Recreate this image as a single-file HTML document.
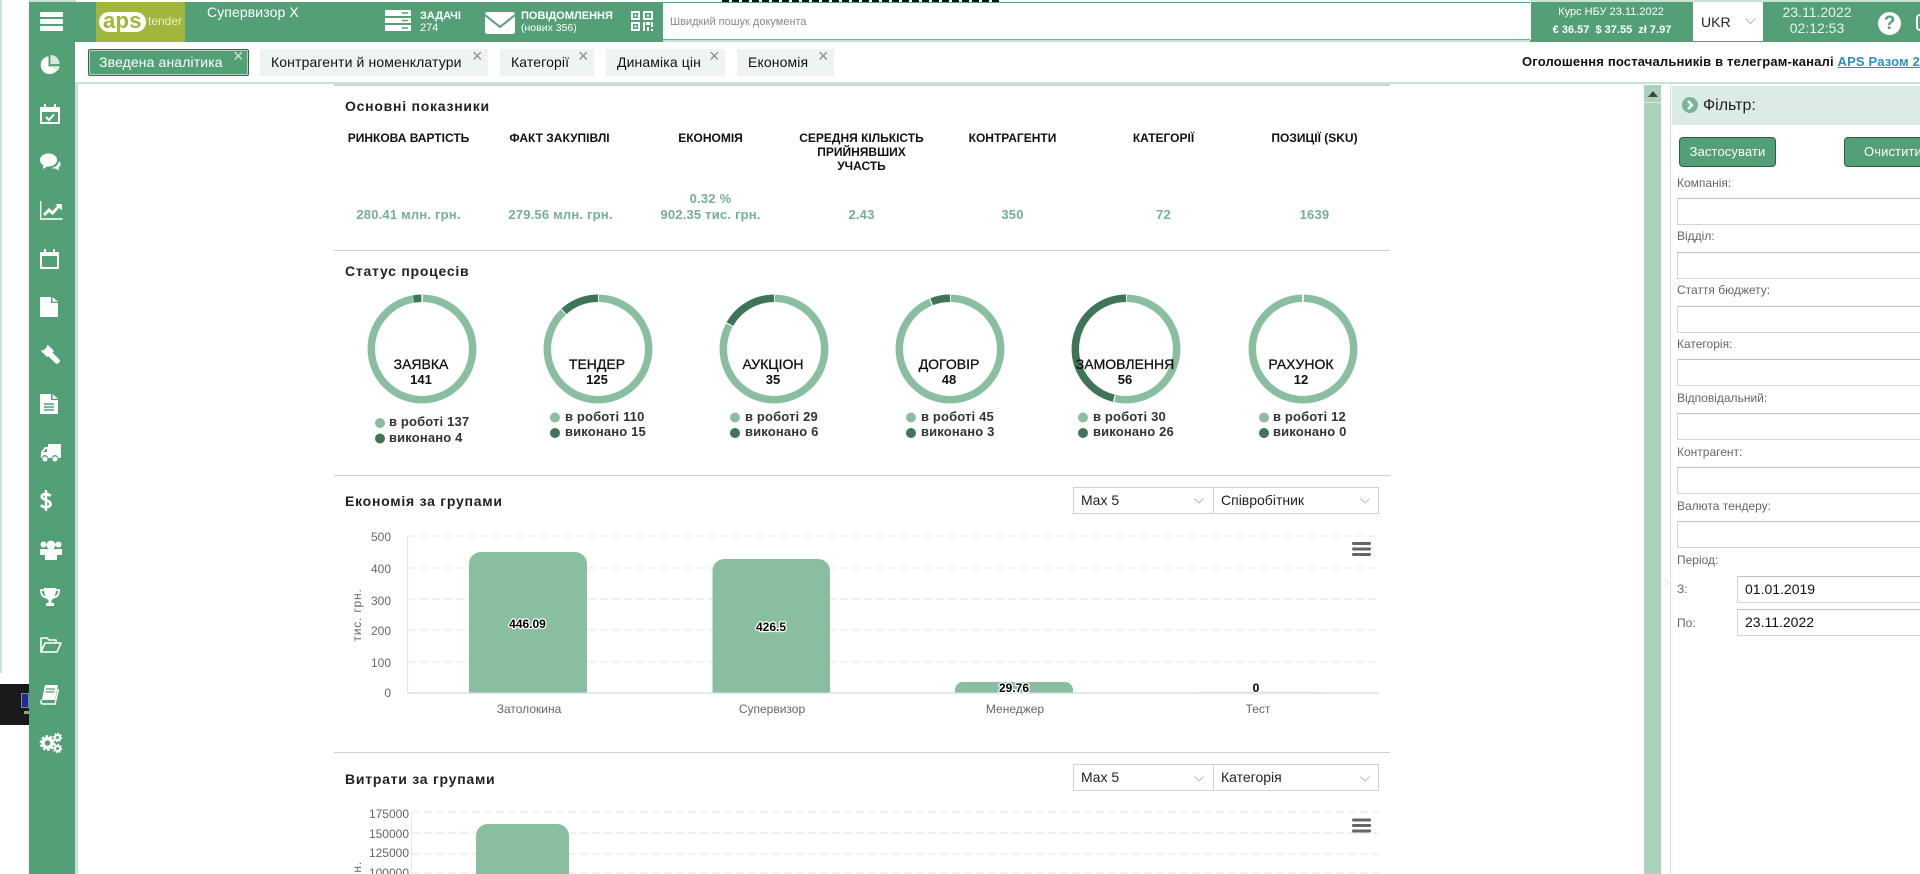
<!DOCTYPE html>
<html lang="uk"><head><meta charset="utf-8"><title>APS tender</title>
<style>
html,body{margin:0;padding:0;background:#fff;width:1920px;height:874px;overflow:hidden}
body{position:relative;font-family:"Liberation Sans",Arial,sans-serif;color:#000}
.a{position:absolute}
.t{position:absolute;white-space:nowrap}
.g{background:#53a077}
.tab{position:absolute;top:49px;height:27px;background:#eef5f1;box-sizing:border-box}
.tab span{position:absolute;top:5px;font-size:14px;line-height:17px;color:#111;white-space:nowrap;left:11px;letter-spacing:.12px}
.tab i{position:absolute;top:-2px;font:normal 18px/18px "Liberation Sans",sans-serif;color:#8c8c8c}
.hr{position:absolute;left:334px;width:1056px;height:2px;background:#d0d0d0}
.h2{position:absolute;left:345px;font-size:14px;font-weight:bold;letter-spacing:.75px;color:#222;white-space:nowrap;line-height:18px}
.sel{position:absolute;height:27px;box-sizing:border-box;border:1px solid #d0d0d0;background:#fff;font-size:14px;line-height:25px;padding-left:7px;color:#222}
.lab{position:absolute;left:1677px;font-size:12px;line-height:14px;color:#666;white-space:nowrap}
.inp{position:absolute;left:1677px;width:260px;height:27px;box-sizing:border-box;border:1px solid #d4d4d4;border-top-color:#c0c0c0;background:#fff}
.btn{position:absolute;top:137px;height:30px;box-sizing:border-box;background:#53a077;border:1px solid #2f5f48;border-radius:4px;color:#fff;font-size:13px;line-height:28px;white-space:nowrap;letter-spacing:.1px}
svg{position:absolute;overflow:visible}
svg text{font-family:"Liberation Sans",Arial,sans-serif}
</style></head><body>

<!-- far-left strip and dark fragment -->
<div class="a" style="left:0;top:0;width:2px;height:673px;background:#c8e2d6"></div>
<div class="a" style="left:0;top:684px;width:29px;height:41px;background:#1a1a1a"></div>
<div class="a" style="left:21px;top:693px;width:8px;height:15px;background:#1a2ea0;border:1px solid #888;box-sizing:border-box"></div>
<div class="a" style="left:24px;top:711px;width:5px;height:3px;background:#999"></div>

<!-- top sliver -->
<div class="a" style="left:722px;top:0;width:278px;height:2px;background:repeating-linear-gradient(90deg,#111 0 7px,#fff 7px 10px)"></div>
<div class="a" style="left:29px;top:0;width:47px;height:2px;background:#c8e2d6"></div>
<div class="a" style="left:1530px;top:0;width:390px;height:2px;background:#c8e2d6"></div>

<!-- header -->
<div class="a g" style="left:29px;top:2px;width:1891px;height:40px"></div>
<div class="a" style="left:663px;top:3px;width:867px;height:36px;background:#fff;border-bottom:1px solid #6fb08e;border-right:1px solid #6fb08e;box-sizing:content-box"></div>
<div class="a" style="left:663px;top:40px;width:867px;height:2px;background:#c8e2d6"></div>
<div class="t" style="left:670px;top:16px;font-size:11px;line-height:13px;color:#888">Швидкий пошук документа</div>

<!-- hamburger -->
<div class="a" style="left:40px;top:12px;width:23px;height:5px;background:#fff;border-radius:1px"></div>
<div class="a" style="left:40px;top:19px;width:23px;height:5px;background:#fff;border-radius:1px"></div>
<div class="a" style="left:40px;top:26px;width:23px;height:5px;background:#fff;border-radius:1px"></div>

<!-- logo -->
<div class="a" style="left:96px;top:2px;width:89px;height:40px;background:#a0b63c"></div>
<div class="a" style="left:99px;top:12px;width:47px;height:20px;border-radius:10px;background:#fff"></div>
<div class="t" style="left:103px;top:9px;font-size:22px;font-weight:bold;line-height:24px;color:#a0b63c;letter-spacing:.3px">aps</div>
<div class="t" style="left:148px;top:14px;font-size:12px;line-height:14px;color:#e8efc8">tender</div>

<div class="t" style="left:207px;top:4px;font-size:14px;line-height:17px;color:#fff;letter-spacing:.1px">Супервизор Х</div>

<!-- tasks -->
<svg style="left:385px;top:10px" width="26" height="21" viewBox="0 0 26 21">
<path fill="#fff" d="M1 0h24a1 1 0 0 1 1 1v5H0V1a1 1 0 0 1 1-1zM0 8h26v5H0zM0 15h26v5a1 1 0 0 1-1 1H1a1 1 0 0 1-1-1z"/>
<path stroke="#53a077" stroke-width="1.6" d="M17 3h6M17 10.500h6M17 18h6"/></svg>
<div class="t" style="left:420px;top:10px;font-size:11px;font-weight:bold;line-height:13px;color:#fff">ЗАДАЧІ</div>
<div class="t" style="left:420px;top:22px;font-size:11px;line-height:13px;color:#fff">274</div>

<!-- envelope -->
<svg style="left:485px;top:12px" width="30" height="22" viewBox="0 0 30 22">
<rect width="30" height="22" rx="2.500" fill="#fff"/><path d="M0 3l15 12L30 3" fill="none" stroke="#53a077" stroke-width="2"/></svg>
<div class="t" style="left:521px;top:10px;font-size:11px;font-weight:bold;line-height:13px;color:#fff">ПОВІДОМЛЕННЯ</div>
<div class="t" style="left:521px;top:22px;font-size:10.500px;line-height:13px;color:#fff">(нових 356)</div>

<!-- qr -->
<svg style="left:631px;top:11px" width="22" height="20" viewBox="0 0 22 20">
<path fill="none" stroke="#fff" stroke-width="2" d="M1 1h7v7H1zM13 1h8v7h-8zM1 12h7v7H1z"/>
<path fill="#fff" d="M3.500 3.500h2v2h-2zM16 3.500h2v2h-2zM3.500 14.500h2v2h-2zM12 11h2v9h-2zM15 11h4v3h-4zM20 11h2v5h-2zM16 16h2v4h-2zM20 18h2v2h-2z"/></svg>

<!-- kurs -->
<div class="a" style="left:1530px;top:2px;width:1px;height:38px;background:#fff"></div>
<div class="t" style="left:1531px;width:160px;text-align:center;top:6px;font-size:11px;line-height:13px;color:#fff">Курс НБУ 23.11.2022</div>
<div class="t" style="left:1532px;width:160px;text-align:center;top:24px;font-size:11px;font-weight:bold;line-height:13px;color:#fff;white-space:pre">€ 36.57  $ 37.55  zł 7.97</div>
<div class="a" style="left:1693px;top:2px;width:70px;height:39px;background:#fff"></div>
<div class="t" style="left:1701px;top:14px;font-size:14px;line-height:17px;color:#222">UKR</div>
<svg style="left:1745px;top:18px" width="11" height="7"><path d="M.5 .5l5 5 5-5" fill="none" stroke="#bbb"/></svg>
<div class="t" style="left:1782px;width:70px;text-align:center;top:4px;font-size:14px;line-height:17px;color:#e8f3ed">23.11.2022</div>
<div class="t" style="left:1782px;width:70px;text-align:center;top:20px;font-size:14px;line-height:17px;color:#e8f3ed">02:12:53</div>
<div class="a" style="left:1878px;top:12px;width:23px;height:23px;border-radius:50%;background:#fff;text-align:center;font-size:19px;font-weight:bold;line-height:23px;color:#53a077">?</div>
<div class="a" style="left:1916px;top:14px;width:10px;height:17px;border:2px solid #fff;border-radius:4px;box-sizing:border-box"></div>

<!-- sidebar -->
<div class="a g" style="left:29px;top:42px;width:46px;height:832px"></div>
<div class="a" style="left:75px;top:82px;width:3px;height:792px;background:#c8e2d6"></div>

<svg style="left:40px;top:55px" width="20" height="20" viewBox="0 0 20 20">
<path fill="#fff" d="M8.500 1.200A9 9 0 1 0 18.500 12L8.500 11.400z"/><path fill="#d8e9df" d="M10.500 0a9 9 0 0 1 9 9l-9 .2z"/><path fill="#d8e9df" d="M11 11.200l8.600-.2a9 9 0 0 1-1.800 5z"/></svg>
<svg style="left:40px;top:104px" width="20" height="20" viewBox="0 0 20 20">
<path fill="none" stroke="#fff" stroke-width="2" d="M1 4h18v15H1z"/><path fill="#fff" d="M1 3h18v5H1zM4 0h2v4H4zM14 0h2v4h-2z"/><path fill="none" stroke="#fff" stroke-width="2" d="M6 13l3 3 5-5.500"/></svg>
<svg style="left:40px;top:153px" width="21" height="19" viewBox="0 0 21 19">
<ellipse cx="8.500" cy="7" rx="8.500" ry="6.500" fill="#fff"/><path fill="#fff" d="M4 11l-1.500 5 6-3z"/>
<path fill="#fff" stroke="#53a077" d="M11 14.500c1.500 0 7-1 7.500-7 2 1 2.500 2.500 2.500 3.500 0 2-1 3.200-2 4l1 3.500-4.500-2.500c-1.500.3-3.500 0-4.500-1.500z"/></svg>
<svg style="left:40px;top:201px" width="23" height="19" viewBox="0 0 23 19">
<path fill="none" stroke="#fff" stroke-width="1.400" d="M.7 0v18h22"/><path fill="none" stroke="#fff" stroke-width="3" d="M4 14l5-5 3.500 3L19 5"/><path fill="#fff" d="M15.500 3H22v6.500z"/></svg>
<svg style="left:40px;top:249px" width="19" height="20" viewBox="0 0 19 20">
<path fill="none" stroke="#fff" stroke-width="2" d="M1 4h17v15H1z"/><path fill="#fff" d="M1 3h17v4H1zM4 0h2v4H4zM13 0h2v4h-2z"/></svg>
<svg style="left:40px;top:297px" width="18" height="20" viewBox="0 0 18 20">
<path fill="#fff" d="M0 0h11v6h7v14H0zM12.500 0L18 4.800h-5.500z"/></svg>
<svg style="left:40px;top:345px" width="20" height="20" viewBox="0 0 20 20">
<path fill="#fff" d="M8 0l6 6-1.500 1.500 6.800 7a2 2 0 0 1 0 2.800l-1 1a2 2 0 0 1-2.800 0l-7-7L7 12 1 6l1.300-1.300 1 1L7.500 1.300l-.8-.9z"/></svg>
<svg style="left:40px;top:394px" width="18" height="20" viewBox="0 0 18 20">
<path fill="#fff" d="M0 0h11v6h7v14H0zM12.500 0L18 4.800h-5.500z"/><path stroke="#53a077" stroke-width="1.400" d="M4 10h10M4 13h10M4 16h10"/></svg>
<svg style="left:41px;top:444px" width="20" height="18" viewBox="0 0 20 18">
<path fill="#fff" d="M7 0h13v14h-3a3 3 0 0 0-6 0H7a3 3 0 0 0-6 0H0V8l4-5h3z"/><circle cx="4" cy="15" r="2.500" fill="#fff"/><circle cx="14" cy="15" r="2.500" fill="#fff"/><path fill="#53a077" d="M2 8l3-3h1v3z"/></svg>
<svg style="left:40px;top:490px" width="12" height="21" viewBox="0 0 12 21">
<path fill="none" stroke="#fff" stroke-width="2.800" d="M10.500 6C9 4 2 3 1.800 6.500S10.500 10 10.500 14 3 18 1 15"/><path stroke="#fff" stroke-width="2.400" d="M6 0v21"/></svg>
<svg style="left:40px;top:540px" width="22" height="20" viewBox="0 0 22 20">
<circle cx="3.500" cy="4.500" r="3" fill="#fff"/><circle cx="18.500" cy="4.500" r="3" fill="#fff"/><path fill="#fff" d="M0 9h6v6H0zM16 9h6v6h-6z"/><circle cx="11" cy="5" r="4.500" fill="#fff"/><path fill="#fff" d="M5 11a3 3 0 0 1 3-2h6a3 3 0 0 1 3 2v9H5z"/></svg>
<svg style="left:40px;top:588px" width="20" height="20" viewBox="0 0 20 20">
<path fill="none" stroke="#fff" stroke-width="1.800" d="M4 2H1c0 5 2 7 5 7.500M16 2h3c0 5-2 7-5 7.500"/><path fill="#fff" d="M4 0h12c0 7-2 11-4.500 12v3H14v3H6v-3h2.500v-3C6 11 4 7 4 0z"/></svg>
<svg style="left:40px;top:636px" width="22" height="18" viewBox="0 0 22 18">
<path fill="none" stroke="#fff" stroke-width="1.600" d="M1 16V2h6l2 2h7v3M1 16l4-9h16l-4 9z" stroke-linejoin="round"/></svg>
<svg style="left:40px;top:685px" width="19" height="20" viewBox="0 0 19 20">
<path fill="#fff" d="M5 0h13l-3 15H2z"/><path fill="none" stroke="#fff" stroke-width="1.500" d="M2 15c-2 2-1 4 1 4h12l3.500-15"/><path stroke="#53a077" stroke-width="1.200" d="M6 4h9M5.500 7h9"/></svg>
<svg style="left:40px;top:733px" width="22" height="20" viewBox="0 0 22 20">
<circle cx="7.500" cy="10" r="4.500" fill="none" stroke="#fff" stroke-width="3.400"/><circle cx="7.500" cy="10" r="7" fill="none" stroke="#fff" stroke-width="1.800" stroke-dasharray="2.500 1.900"/>
<circle cx="17.500" cy="4.500" r="2.500" fill="none" stroke="#fff" stroke-width="2"/><circle cx="17.500" cy="4.500" r="4" fill="none" stroke="#fff" stroke-width="1.400" stroke-dasharray="1.700 1.400"/>
<circle cx="17.500" cy="15.500" r="2.500" fill="none" stroke="#fff" stroke-width="2"/><circle cx="17.500" cy="15.500" r="4" fill="none" stroke="#fff" stroke-width="1.400" stroke-dasharray="1.700 1.400"/></svg>

<!-- tabs row -->
<div class="a" style="left:75px;top:82px;width:1845px;height:2px;background:#c8e2d6"></div>
<div class="tab" style="left:88px;width:161px;background:#53a077;border:1px solid #2f6a4c;border-radius:2px;box-shadow:inset 0 0 0 1px rgba(255,255,255,.55)"><span style="color:#fff;left:10px;top:4px">Зведена аналітика</span><i style="left:144px;color:#cfe4d8;top:-3px">×</i></div>
<div class="tab" style="left:260px;width:228px"><span>Контрагенти й номенклатури</span><i style="left:212px">×</i></div>
<div class="tab" style="left:500px;width:94px"><span>Категорії</span><i style="left:78px">×</i></div>
<div class="tab" style="left:606px;width:119px"><span>Динаміка цін</span><i style="left:103px">×</i></div>
<div class="tab" style="left:737px;width:97px"><span>Економія</span><i style="left:81px">×</i></div>
<div class="t" style="left:1522px;top:54px;font-size:13px;font-weight:bold;line-height:16px;color:#111;letter-spacing:.17px">Оголошення постачальників в телеграм-каналі <a style="color:#2c8fc0;text-decoration:underline">APS Разом 24</a></div>

<!-- scrollbar and filter panel -->
<div class="a" style="left:1644px;top:85px;width:17px;height:789px;background:#abd2bb"></div>
<div class="a" style="left:1644px;top:102px;width:17px;height:1px;background:#d4e8dc"></div>
<svg style="left:1648px;top:91px" width="10" height="6"><path d="M0 6l5-6 5 6z" fill="#444"/></svg>
<div class="a" style="left:1670px;top:85px;width:1px;height:789px;background:#c8e2d6"></div>
<div class="a" style="left:1672px;top:86px;width:248px;height:39px;background:#dcece5"></div>
<svg style="left:1682px;top:97px" width="16" height="16"><circle cx="8" cy="8" r="8" fill="#79b597"/><path d="M6 4l4 4-4 4" fill="none" stroke="#fff" stroke-width="2.400"/></svg>
<div class="t" style="left:1703px;top:96px;font-size:16px;line-height:19px;color:#222">Фільтр:</div>
<div class="btn" style="left:1679px;width:97px;text-align:center">Застосувати</div>
<div class="btn" style="left:1844px;width:100px;padding-left:19px">Очистити</div>

<div class="lab" style="top:176px">Компанія:</div><div class="inp" style="top:198px"></div>
<div class="lab" style="top:229px">Відділ:</div><div class="inp" style="top:252px"></div>
<div class="lab" style="top:283px">Стаття бюджету:</div><div class="inp" style="top:306px"></div>
<div class="lab" style="top:337px">Категорія:</div><div class="inp" style="top:359px"></div>
<div class="lab" style="top:391px">Відповідальний:</div><div class="inp" style="top:413px"></div>
<div class="lab" style="top:445px">Контрагент:</div><div class="inp" style="top:467px"></div>
<div class="lab" style="top:499px">Валюта тендеру:</div><div class="inp" style="top:521px"></div>
<div class="lab" style="top:553px">Період:</div>
<div class="lab" style="top:582px">З:</div>
<div class="inp" style="left:1737px;top:576px;width:200px;font-size:14px;line-height:25px;padding-left:7px;color:#111">01.01.2019</div>
<div class="lab" style="top:616px">По:</div>
<div class="inp" style="left:1737px;top:609px;width:200px;font-size:14px;line-height:25px;padding-left:7px;color:#111">23.11.2022</div>
<svg style="left:1663px;top:577px" width="6" height="11"><path d="M1 1l4 4.500-4 4.500" fill="none" stroke="#eee" stroke-width="1.500"/></svg>

<!-- section rules -->
<div class="hr" style="top:84px"></div>
<div class="hr" style="top:250px;height:1px"></div>
<div class="hr" style="top:475px;height:1px"></div>
<div class="hr" style="top:752px;height:1px"></div>

<div class="h2" style="top:97px">Основні показники</div>
<div class="h2" style="top:262px">Статус процесів</div>
<div class="h2" style="top:492px">Економія за групами</div>
<div class="h2" style="top:770px">Витрати за групами</div>

<!-- main SVG -->
<svg style="left:0;top:0" width="1920" height="874" viewBox="0 0 1920 874">
<g font-size="12" font-weight="bold" text-anchor="middle" fill="#111">
<text x="408.500" y="142">РИНКОВА ВАРТІСТЬ</text>
<text x="559.500" y="142">ФАКТ ЗАКУПІВЛІ</text>
<text x="710.500" y="142">ЕКОНОМІЯ</text>
<text x="861.500" y="142">СЕРЕДНЯ КІЛЬКІСТЬ</text>
<text x="861.500" y="156">ПРИЙНЯВШИХ</text>
<text x="861.500" y="170">УЧАСТЬ</text>
<text x="1012.500" y="142">КОНТРАГЕНТИ</text>
<text x="1163.500" y="142">КАТЕГОРІЇ</text>
<text x="1314.500" y="142">ПОЗИЦІЇ (SKU)</text>
</g>
<g font-size="13" font-weight="bold" text-anchor="middle" fill="#75b095" letter-spacing=".2">
<text x="408.500" y="219">280.41 млн. грн.</text>
<text x="560.500" y="219">279.56 млн. грн.</text>
<text x="710.500" y="203">0.32 %</text>
<text x="710.500" y="219">902.35 тис. грн.</text>
<text x="861.500" y="219">2.43</text>
<text x="1012.500" y="219">350</text>
<text x="1163.500" y="219">72</text>
<text x="1314.500" y="219">1639</text>
</g>

<!-- donuts -->
<g fill="none" stroke-width="7.500">
<g transform="rotate(-90 422 349)"><circle cx="422" cy="349" r="50.700" pathLength="100" stroke="#89bf9f" stroke-dasharray="96.900 200" stroke-dashoffset="-.3"/><circle cx="422" cy="349" r="50.700" pathLength="100" stroke="#3d7555" stroke-dasharray="2.500 200" stroke-dashoffset="-97.300"/></g>
<g transform="rotate(-90 598 349)"><circle cx="598" cy="349" r="50.700" pathLength="100" stroke="#89bf9f" stroke-dasharray="87.700 200" stroke-dashoffset="-.3"/><circle cx="598" cy="349" r="50.700" pathLength="100" stroke="#3d7555" stroke-dasharray="11.700 200" stroke-dashoffset="-88.300"/></g>
<g transform="rotate(-90 774 349)"><circle cx="774" cy="349" r="50.700" pathLength="100" stroke="#89bf9f" stroke-dasharray="82.500 200" stroke-dashoffset="-.3"/><circle cx="774" cy="349" r="50.700" pathLength="100" stroke="#3d7555" stroke-dasharray="16.800 200" stroke-dashoffset="-83.200"/></g>
<g transform="rotate(-90 950 349)"><circle cx="950" cy="349" r="50.700" pathLength="100" stroke="#89bf9f" stroke-dasharray="93.400 200" stroke-dashoffset="-.3"/><circle cx="950" cy="349" r="50.700" pathLength="100" stroke="#3d7555" stroke-dasharray="5.900 200" stroke-dashoffset="-94.100"/></g>
<g transform="rotate(-90 1126 349)"><circle cx="1126" cy="349" r="50.700" pathLength="100" stroke="#89bf9f" stroke-dasharray="53.200 200" stroke-dashoffset="-.3"/><circle cx="1126" cy="349" r="50.700" pathLength="100" stroke="#3d7555" stroke-dasharray="46.100 200" stroke-dashoffset="-53.900"/></g>
<g transform="rotate(-90 1303 349)"><circle cx="1303" cy="349" r="50.700" pathLength="100" stroke="#89bf9f" stroke-dasharray="99.400 200" stroke-dashoffset="-.3"/></g>
</g>
<g text-anchor="middle" font-size="14" fill="#111" stroke="#111" stroke-width=".3">
<text x="421" y="369">ЗАЯВКА</text><text x="597" y="369">ТЕНДЕР</text><text x="773" y="369">АУКЦІОН</text><text x="949" y="369">ДОГОВІР</text><text x="1125" y="369">ЗАМОВЛЕННЯ</text><text x="1301" y="369">РАХУНОК</text>
</g>
<g text-anchor="middle" font-size="13" font-weight="bold" fill="#111">
<text x="421" y="384">141</text><text x="597" y="384">125</text><text x="773" y="384">35</text><text x="949" y="384">48</text><text x="1125" y="384">56</text><text x="1301" y="384">12</text>
</g>
<!-- legends -->
<g font-size="13" font-weight="bold" fill="#333" letter-spacing=".15">
<text x="389" y="426">в роботі 137</text><text x="389" y="442">виконано 4</text>
<text x="565" y="421">в роботі 110</text><text x="565" y="436">виконано 15</text>
<text x="745" y="421">в роботі 29</text><text x="745" y="436">виконано 6</text>
<text x="921" y="421">в роботі 45</text><text x="921" y="436">виконано 3</text>
<text x="1093" y="421">в роботі 30</text><text x="1093" y="436">виконано 26</text>
<text x="1273" y="421">в роботі 12</text><text x="1273" y="436">виконано 0</text>
</g>
<g fill="#89bf9f"><circle cx="380" cy="423" r="5"/><circle cx="555" cy="417.500" r="5"/><circle cx="735" cy="417.500" r="5"/><circle cx="911" cy="417.500" r="5"/><circle cx="1083" cy="417.500" r="5"/><circle cx="1264" cy="417.500" r="5"/></g>
<g fill="#3d7555"><circle cx="380" cy="438.500" r="5"/><circle cx="555" cy="433" r="5"/><circle cx="735" cy="433" r="5"/><circle cx="911" cy="433" r="5"/><circle cx="1083" cy="433" r="5"/><circle cx="1264" cy="433" r="5"/></g>

<!-- chart 1 -->
<g stroke="#e6e6e6" stroke-dasharray="8 4">
<path d="M408 536H1379M408 568H1379M408 599H1379M408 630H1379M408 662H1379"/>
<path d="M412 812H1379M412 833H1379M412 854H1379M412 873H1379"/>
</g>
<path d="M407.500 536V693" stroke="#dfe5f5" fill="none"/>
<path d="M407.500 693H1379" stroke="#d8dff0" stroke-width="1.500" fill="none"/>
<g fill="#89bf9f">
<path d="M469 692.500V564a12 12 0 0 1 12-12h94a12 12 0 0 1 12 12V692.500z"/>
<path d="M712.500 692.500V571a12 12 0 0 1 12-12h93.500a12 12 0 0 1 12 12V692.500z"/>
<path d="M955 692.500V690a8 8 0 0 1 8-8h102a8 8 0 0 1 8 8V692.500z"/>
</g>
<rect x="1199" y="691.500" width="117" height="1" fill="#dceee5"/>
<g font-size="12" font-weight="bold" text-anchor="middle" fill="#000" stroke="#fff" stroke-width="2.400" paint-order="stroke" stroke-linejoin="round">
<text x="527.500" y="628">446.09</text><text x="771" y="631">426.5</text><text x="1014" y="692">29.76</text><text x="1256" y="692">0</text>
</g>
<g font-size="12" text-anchor="end" fill="#666">
<text x="391" y="541">500</text><text x="391" y="573">400</text><text x="391" y="605">300</text><text x="391" y="635">200</text><text x="391" y="667">100</text><text x="391" y="697">0</text>
</g>
<g font-size="12" text-anchor="middle" fill="#666">
<text x="529" y="713">Затолокина</text><text x="772" y="713">Супервизор</text><text x="1015" y="713">Менеджер</text><text x="1258" y="713">Тест</text>
</g>
<text transform="translate(361 615) rotate(-90)" font-size="12" text-anchor="middle" fill="#666" letter-spacing=".8">тис. грн.</text>
<g fill="#666"><rect x="1352" y="542" width="19" height="3" rx="1.200"/><rect x="1352" y="547.500" width="19" height="3" rx="1.200"/><rect x="1352" y="553" width="19" height="3" rx="1.200"/>
<rect x="1352" y="818.500" width="19" height="3" rx="1.200"/><rect x="1352" y="824" width="19" height="3" rx="1.200"/><rect x="1352" y="829.500" width="19" height="3" rx="1.200"/></g>

<!-- chart 2 -->
<path d="M476 874V836a12 12 0 0 1 12-12h69a12 12 0 0 1 12 12V874z" fill="#89bf9f"/>
<path d="M411.500 812V874" stroke="#dfe5f5" fill="none"/>
<g font-size="12" text-anchor="end" fill="#666">
<text x="409" y="818">175000</text><text x="409" y="838">150000</text><text x="409" y="857">125000</text><text x="409" y="877">100000</text>
</g>
<text transform="translate(361 861) rotate(-90)" font-size="12" text-anchor="end" fill="#666" letter-spacing=".8">тис. грн.</text>
</svg>

<!-- selects -->
<div class="sel" style="left:1073px;top:487px;width:141px">Max 5</div>
<div class="sel" style="left:1213px;top:487px;width:166px">Співробітник</div>
<div class="sel" style="left:1073px;top:764px;width:141px">Max 5</div>
<div class="sel" style="left:1213px;top:764px;width:166px">Категорія</div>
<svg style="left:1194px;top:498px" width="10" height="6"><path d="M.5 .5l4.500 4.500 4.500-4.500" fill="none" stroke="#bbb"/></svg>
<svg style="left:1360px;top:498px" width="10" height="6"><path d="M.5 .5l4.500 4.500 4.500-4.500" fill="none" stroke="#bbb"/></svg>
<svg style="left:1194px;top:776px" width="10" height="6"><path d="M.5 .5l4.500 4.500 4.500-4.500" fill="none" stroke="#bbb"/></svg>
<svg style="left:1360px;top:776px" width="10" height="6"><path d="M.5 .5l4.500 4.500 4.500-4.500" fill="none" stroke="#bbb"/></svg>

</body></html>
